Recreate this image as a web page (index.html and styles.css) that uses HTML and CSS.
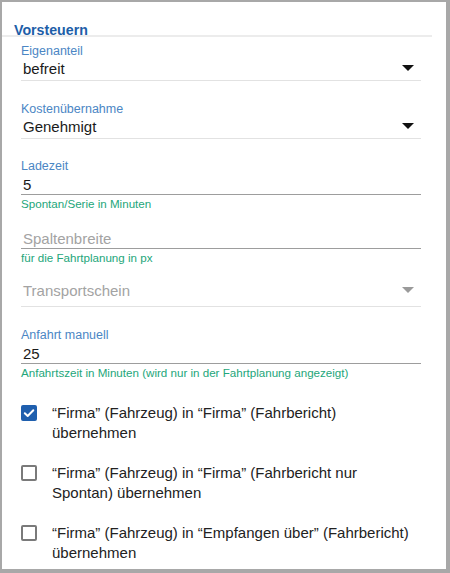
FILE: index.html
```html
<!DOCTYPE html>
<html lang="de">
<head>
<meta charset="utf-8">
<title>Vorsteuern</title>
<link rel="stylesheet" href="styles.css">
</head>
<body>
<div class="frame">
  <div class="section-title">Vorsteuern</div>
  <div class="form">
    <div class="field select f-eigen">
      <div class="label">Eigenanteil</div>
      <div class="value-row"><span class="value">befreit</span><span class="arrow"></span></div>
    </div>
    <div class="field select f-kosten">
      <div class="label">Kostenübernahme</div>
      <div class="value-row"><span class="value">Genehmigt</span><span class="arrow"></span></div>
    </div>
    <div class="field input f-lade">
      <div class="label">Ladezeit</div>
      <div class="value-row strong"><span class="value">5</span></div>
      <div class="hint">Spontan/Serie in Minuten</div>
    </div>
    <div class="field input f-spalten">
      <div class="value-row strong"><span class="value placeholder">Spaltenbreite</span></div>
      <div class="hint">für die Fahrtplanung in px</div>
    </div>
    <div class="field select disabled f-transport">
      <div class="value-row tall"><span class="value placeholder">Transportschein</span><span class="arrow"></span></div>
    </div>
    <div class="field input f-anfahrt">
      <div class="label">Anfahrt manuell</div>
      <div class="value-row strong"><span class="value">25</span></div>
      <div class="hint">Anfahrtszeit in Minuten (wird nur in der Fahrtplanung angezeigt)</div>
    </div>
    <div class="checks">
      <label class="check">
        <span class="box checked"><svg viewBox="0 0 16 16" width="16" height="16"><path d="M3.8 8.3 L6.7 11 L12.3 5.3" fill="none" stroke="#fff" stroke-width="2" stroke-linecap="round" stroke-linejoin="round"/></svg></span>
        <span class="check-text">“Firma” (Fahrzeug) in “Firma” (Fahrbericht) übernehmen</span>
      </label>
      <label class="check">
        <span class="box"></span>
        <span class="check-text">“Firma” (Fahrzeug) in “Firma” (Fahrbericht nur Spontan) übernehmen</span>
      </label>
      <label class="check">
        <span class="box"></span>
        <span class="check-text">“Firma” (Fahrzeug) in “Empfangen über” (Fahrbericht) übernehmen</span>
      </label>
    </div>
  </div>
</div>
</body>
</html>
```

FILE: styles.css
```css
* { box-sizing: border-box; }
html, body {
  margin: 0;
  padding: 0;
  background: #a8a8a8;
}
body {
  padding: 2px 4px 4px 2px;
  font-family: "Liberation Sans", Arial, sans-serif;
  width: 450px;
  height: 573px;
}
.frame {
  background: #fff;
  height: 567px;
  overflow: hidden;
}
.section-title {
  color: #1d5ea8;
  font-weight: bold;
  font-size: 14.2px;
  line-height: 16px;
  padding: 20px 0 0 12px;
  height: 35px;
  margin-right: 14px;
  border-bottom: 2px solid #ececec;
}
.form {
  padding: 7px 25px 0 19px;
}
.field {
  display: flex;
  flex-direction: column;
}
.label {
  color: #4b86c4;
  font-size: 12.5px;
  line-height: 14px;
  height: 14px;
}
.value-row {
  display: flex;
  align-items: flex-start;
  justify-content: space-between;
  border-bottom: 1px solid #e2e2e2;
  margin-top: 2px;
  padding: 0 7px 2px 2px;
  height: 21px;
}
.value-row.strong {
  border-bottom-color: #9d9d9d;
  height: 19px;
  margin-top: 3px;
}
.value-row.tall {
  height: 25px;
}
.value {
  color: #1a1a1a;
  font-size: 15px;
  line-height: 18px;
}
.value.placeholder {
  color: #a3a3a3;
}
.arrow {
  width: 0;
  height: 0;
  border-left: 6px solid transparent;
  border-right: 6px solid transparent;
  border-top: 6px solid #111;
  margin-top: 5px;
}
.disabled .arrow {
  border-top-color: #9a9a9a;
}
.hint {
  color: #23a67a;
  font-size: 11.6px;
  line-height: 13px;
  margin-top: 2px;
}
.f-kosten { margin-top: 21px; }
.f-lade { margin-top: 20px; }
.f-spalten { margin-top: 16px; }
.f-transport { margin-top: 16px; }
.f-anfahrt { margin-top: 21px; }
.f-spalten .value-row.strong { margin-top: 4px; }
.checks {
  margin-top: 24px;
  display: flex;
  flex-direction: column;
  gap: 20px;
}
.check {
  display: flex;
  align-items: flex-start;
  gap: 15px;
}
.box {
  flex: none;
  width: 16px;
  height: 16px;
  border: 2px solid #7a7a7a;
  border-radius: 2px;
  margin-top: 2px;
  display: flex;
  align-items: center;
  justify-content: center;
}
.box.checked {
  background: #1f5fae;
  border-color: #1f5fae;
}
.box.checked svg {
  flex: none;
}
.check-text {
  color: #222;
  font-size: 15px;
  line-height: 20px;
  width: 369px;
}
```
